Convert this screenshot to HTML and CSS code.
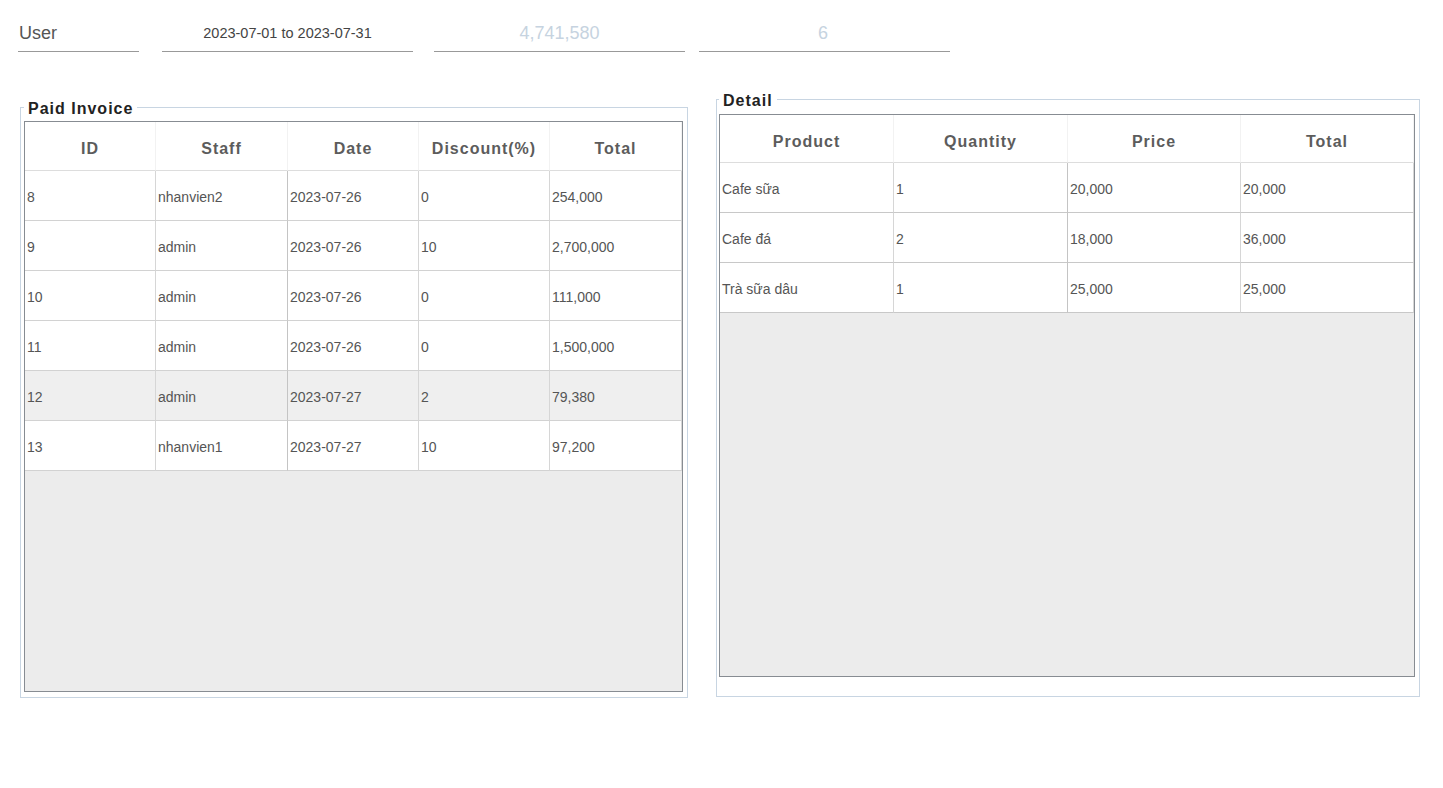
FILE: index.html
```html
<!DOCTYPE html>
<html lang="vi">
<head>
<meta charset="utf-8">
<title>Paid Invoice</title>
<link rel="stylesheet" href="styles.css">
</head>
<body>
<div class="toolbar">
  <div class="field field-user">User</div>
  <div class="field field-date">2023-07-01 to 2023-07-31</div>
  <div class="field field-total">4,741,580</div>
  <div class="field field-count">6</div>
</div>

<div class="panels">
  <fieldset class="panel panel-invoice">
    <legend>Paid Invoice</legend>
    <div class="grid-view grid-invoice">
      <div class="row head">
        <div class="cell">ID</div>
        <div class="cell">Staff</div>
        <div class="cell">Date</div>
        <div class="cell">Discount(%)</div>
        <div class="cell">Total</div>
      </div>
      <div class="row">
        <div class="cell">8</div><div class="cell">nhanvien2</div><div class="cell">2023-07-26</div><div class="cell">0</div><div class="cell">254,000</div>
      </div>
      <div class="row">
        <div class="cell">9</div><div class="cell">admin</div><div class="cell">2023-07-26</div><div class="cell">10</div><div class="cell">2,700,000</div>
      </div>
      <div class="row">
        <div class="cell">10</div><div class="cell">admin</div><div class="cell">2023-07-26</div><div class="cell">0</div><div class="cell">111,000</div>
      </div>
      <div class="row">
        <div class="cell">11</div><div class="cell">admin</div><div class="cell">2023-07-26</div><div class="cell">0</div><div class="cell">1,500,000</div>
      </div>
      <div class="row selected">
        <div class="cell">12</div><div class="cell">admin</div><div class="cell">2023-07-27</div><div class="cell">2</div><div class="cell">79,380</div>
      </div>
      <div class="row">
        <div class="cell">13</div><div class="cell">nhanvien1</div><div class="cell">2023-07-27</div><div class="cell">10</div><div class="cell">97,200</div>
      </div>
    </div>
  </fieldset>

  <fieldset class="panel panel-detail">
    <legend>Detail</legend>
    <div class="grid-view grid-detail">
      <div class="row head">
        <div class="cell">Product</div>
        <div class="cell">Quantity</div>
        <div class="cell">Price</div>
        <div class="cell">Total</div>
      </div>
      <div class="row">
        <div class="cell">Cafe sữa</div><div class="cell">1</div><div class="cell">20,000</div><div class="cell">20,000</div>
      </div>
      <div class="row">
        <div class="cell">Cafe đá</div><div class="cell">2</div><div class="cell">18,000</div><div class="cell">36,000</div>
      </div>
      <div class="row">
        <div class="cell">Trà sữa dâu</div><div class="cell">1</div><div class="cell">25,000</div><div class="cell">25,000</div>
      </div>
    </div>
  </fieldset>
</div>
</body>
</html>
```

FILE: styles.css
```css
* { box-sizing: border-box; }

html, body {
  margin: 0;
  padding: 0;
  background: #ffffff;
  font-family: "Liberation Sans", Arial, sans-serif;
  color: #555555;
}

/* ---------- top fields ---------- */
.toolbar {
  display: flex;
  align-items: flex-start;
  padding-top: 17px;
}

.field {
  height: 35px;
  line-height: 33px;
  border-bottom: 1px solid #999999;
  white-space: nowrap;
}

.field-user {
  margin-left: 18px;
  width: 121px;
  padding-left: 1px;
  font-size: 18px;
  color: #555555;
}

.field-date {
  margin-left: 23px;
  width: 251px;
  text-align: center;
  font-size: 14.5px;
  color: #444444;
}

.field-total {
  margin-left: 21px;
  width: 251px;
  text-align: center;
  font-size: 18px;
  color: #c6d3e0;
}

.field-count {
  margin-left: 14px;
  width: 251px;
  padding-right: 3px;
  text-align: center;
  font-size: 18px;
  color: #c6d3e0;
}

/* ---------- panels ---------- */
.panels {
  display: flex;
  align-items: flex-start;
  margin-top: 37px;
}

.panel {
  margin: 0;
  border: 1px solid #c8d5e2;
  min-width: 0;
}

.panel legend {
  padding: 4px 4px 0;
  line-height: 16px;
  font-size: 16px;
  font-weight: bold;
  letter-spacing: 1px;
  color: #222222;
}

.panel-invoice {
  margin-left: 20px;
  margin-top: 8px;
  padding: 4px 4px 5px 3px;
}

.panel-detail {
  margin-left: 28px;
  padding: 5px 4px 19px 2px;
}

/* ---------- grid view ---------- */
.grid-view {
  border: 1px solid #878c92;
  background: #ececec;
  overflow: hidden;
}

.grid-invoice {
  width: 659px;
  height: 571px;
}

.grid-detail {
  width: 696px;
  height: 563px;
}

.row {
  display: grid;
  background: #ffffff;
}

.grid-invoice .row { grid-template-columns: 131px 132px 131px 131px 132px; }
.grid-detail .row  { grid-template-columns: 174px 174px 173px 173px; }

.row.selected { background: #efefef; }

.cell {
  height: 50px;
  padding: 2px 0 0 2px;
  display: flex;
  align-items: center;
  border-right: 1px solid #d6d6d6;
  border-bottom: 1px solid #d2d2d2;
  font-size: 14px;
  color: #555555;
  white-space: nowrap;
  overflow: hidden;
}

.grid-invoice .row:not(.head) .cell:nth-child(2) { border-right-color: #c4c4c4; }
.grid-detail .row:not(.head) .cell:nth-child(2) { border-right-color: #c4c4c4; }
.grid-detail .row:not(.head) .cell { border-bottom-color: #c8c8c8; }

.row.head .cell {
  height: 49px;
  padding: 5px 0 0 0;
  justify-content: center;
  font-size: 16px;
  font-weight: bold;
  letter-spacing: 1px;
  color: #5c5c5c;
  border-right-color: #f2f2f2;
  border-bottom-color: #dddddd;
}

.grid-detail .row.head .cell { height: 48px; padding-top: 6px; }
```
